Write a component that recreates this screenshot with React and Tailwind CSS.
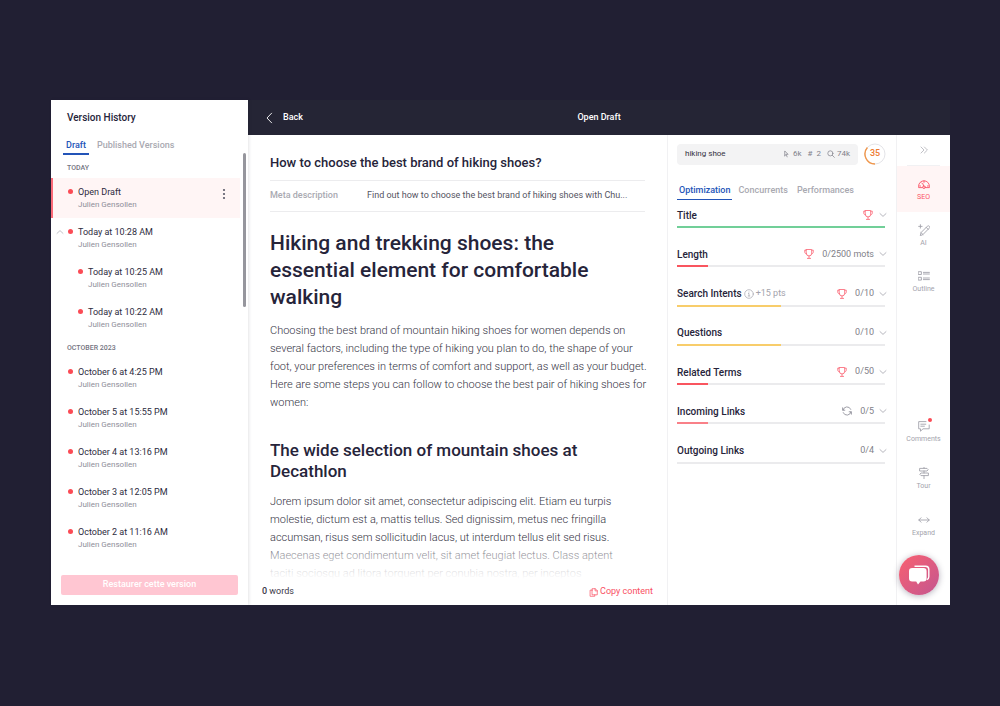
import React from "react";

const TODAY = [
  { title: "Open Draft", state: "active" },
  { title: "Today at 10:28 AM", state: "expanded" },
  { title: "Today at 10:25 AM", state: "nested" },
  { title: "Today at 10:22 AM", state: "nested" },
];

const OCTOBER = [
  { title: "October 6 at 4:25 PM" },
  { title: "October 5 at 15:55 PM" },
  { title: "October 4 at 13:16 PM" },
  { title: "October 3 at 12:05 PM" },
  { title: "October 2 at 11:16 AM" },
];

const CRITERIA = [
  { label: "Title", icon: "trophy", value: 100, color: "bg-[#71cf98]" },
  { label: "Length", icon: "trophy", count: "0/2500 mots", value: 15, color: "bg-[#f9555f]" },
  { label: "Search Intents", icon: "trophy", count: "0/10", value: 50, color: "bg-[#f8cd6b]", hint: "+15 pts" },
  { label: "Questions", count: "0/10", value: 50, color: "bg-[#f8cd6b]" },
  { label: "Related Terms", icon: "trophy", count: "0/50", value: 15, color: "bg-[#f9555f]" },
  { label: "Incoming Links", icon: "refresh", count: "0/5", value: 15, color: "bg-[#f98088]" },
  { label: "Outgoing Links", count: "0/4", value: 0, color: "bg-[#f9555f]" },
];

function Svg({ className, box = "0 0 24 24", stroke = 1.6, children }) {
  return (
    <svg
      className={className}
      viewBox={box}
      fill="none"
      stroke="currentColor"
      strokeWidth={stroke}
      strokeLinecap="round"
      strokeLinejoin="round"
      aria-hidden="true"
    >
      {children}
    </svg>
  );
}

const ChevronDown = () => (
  <Svg className="h-2 w-2 text-[#a3a3ac]" box="0 0 8 8" stroke={0.8}>
    <path d="M1 2.6 4 5.4 7 2.6" />
  </Svg>
);

const Trophy = () => (
  <Svg className="h-3 w-3 text-[#fb7280]" box="0 0 12 12" stroke={0.9}>
    <path d="M3.3 1.5h5.4v3.800A2.700 2.700 0 0 1 6 8a2.700 2.700 0 0 1-2.700-2.700z" />
    <path d="M3.300 2.200H1.700v1.600c0 1.200.7 2 1.700 2.200M8.700 2.200h1.600v1.600c0 1.200-.7 2-1.700 2.200M6 8v2.200M4.400 10.400h3.200" />
  </Svg>
);

const Refresh = () => (
  <Svg className="h-3 w-3 text-[#94949e]" box="0 0 12 12" stroke={0.9}>
    <path d="M2 5.2A4.1 4.1 0 0 1 9.8 4.4M10 6.8a4.1 4.1 0 0 1-7.8.8" />
    <path d="M1.600 2.8v2.4h2.2M10.400 9.2V6.8H8.200" />
  </Svg>
);

function Version({ title, state }) {
  const active = state === "active";
  const nested = state === "nested";
  return (
    <li
      className={
        "flex h-10 items-start border-l-2 pt-2 " +
        (active ? "border-l-[#fb6a78] bg-[#fff5f5] " : "border-l-transparent ") +
        (nested ? "pl-[13px]" : "pl-[3px]")
      }
    >
      <span className="flex h-3 w-3 items-center justify-center">
        {state === "expanded" && (
          <button type="button" aria-label="Collapse versions" className="-ml-1 text-[#b0b0b8]">
            <Svg className="h-2 w-2" box="0 0 8 8" stroke={0.8}>
              <path d="M1 5.4 4 2.6 7 5.4" />
            </Svg>
          </button>
        )}
      </span>
      <span className="mt-[3px] h-[5px] w-[5px] rounded-full bg-[#fb4b55]" />
      <div className="ml-[5px] flex-1">
        <p className="text-[9px] leading-3 text-[#2d2b40]">{title}</p>
        <p className="text-[8px] leading-[14px] text-[#8e8e99]">Julien Gensollen</p>
      </div>
      {active && (
        <button type="button" aria-label="Version options" className="mr-2.5 mt-0.5 text-[#5b5a68]">
          <svg className="h-3 w-3" viewBox="0 0 12 12" fill="currentColor" aria-hidden="true">
            <circle cx="6" cy="2" r="1.1" />
            <circle cx="6" cy="6" r="1.1" />
            <circle cx="6" cy="10" r="1.1" />
          </svg>
        </button>
      )}
    </li>
  );
}

function Group({ label, items }) {
  return (
    <section>
      <h3 className="flex h-5 items-center pl-4 text-[7px] font-medium uppercase text-[#74747f]">{label}</h3>
      <ul>
        {items.map((item) => (
          <Version key={item.title} {...item} />
        ))}
      </ul>
    </section>
  );
}

function Sidebar() {
  return (
    <aside className="z-10 flex w-[197px] shrink-0 flex-col bg-white shadow-[1px_0_3px_rgba(30,30,50,0.12)]">
      <h2 className="pl-4 pt-3 text-[10px] font-medium leading-3 text-[#26243a]">Version History</h2>
      <nav className="mt-[13px] flex gap-[5px] pl-3 text-[9px] font-medium leading-4">
        <a href="#draft" className="border-b-2 border-[#2354b8] px-[3px] text-[#2354b8]">
          Draft
        </a>
        <a href="#published" className="px-[3px] text-[#a9a9b1]">
          Published Versions
        </a>
      </nav>
      <div className="mt-[3px] flex flex-1">
        <div className="flex-1">
          <Group label="Today" items={TODAY} />
          <Group label="October 2023" items={OCTOBER} />
        </div>
        <div className="-mt-[5px] mx-[2px] ml-[3px] h-[154px] w-[3px] rounded-full bg-[#96969d]" />
      </div>
      <div className="pb-[10px] pl-[10px] pr-2.5">
        <button type="button" className="h-5 w-full rounded-xs bg-[#ffc6d2] text-[9px] font-medium text-white">
          Restaurer cette version
        </button>
      </div>
    </aside>
  );
}

function Editor() {
  return (
    <main className="flex min-w-0 flex-1 flex-col">
      <div className="flex flex-1 flex-col pl-[22px] pr-[22px] text-[#26243a]">
        <h1 className="flex h-[46px] items-center border-b border-[#ececee] pt-[10px] text-[13px] font-medium">
          How to choose the best brand of hiking shoes?
        </h1>
        <div className="flex h-[31px] items-center border-b border-[#ececee]">
          <span className="w-[97px] text-[9px] font-medium text-[#a9a9b1]">Meta description</span>
          <span className="flex-1 whitespace-nowrap text-[9px] text-[#55545f]">
            Find out how to choose the best brand of hiking shoes with Chu...
          </span>
        </div>
        <article className="relative -mr-4 h-[367px] overflow-hidden whitespace-nowrap">
          <h2 className="mt-[18px] text-[21px] font-medium leading-[27px]">
            Hiking and trekking shoes: the
            <br />
            essential element for comfortable
            <br />
            walking
          </h2>
          <p className="mt-[11px] text-[11px] font-light leading-[18px] text-[#34333f]">
            Choosing the best brand of mountain hiking shoes for women depends on
            <br />
            several factors, including the type of hiking you plan to do, the shape of your
            <br />
            foot, your preferences in terms of comfort and support, as well as your budget.
            <br />
            Here are some steps you can follow to choose the best pair of hiking shoes for
            <br />
            women:
          </p>
          <h3 className="mt-7 text-[17px] font-medium leading-[21px]">
            The wide selection of mountain shoes at
            <br />
            Decathlon
          </h3>
          <p className="mt-[11px] text-[11px] font-light leading-[18px] text-[#34333f]">
            Jorem ipsum dolor sit amet, consectetur adipiscing elit. Etiam eu turpis
            <br />
            molestie, dictum est a, mattis tellus. Sed dignissim, metus nec fringilla
            <br />
            accumsan, risus sem sollicitudin lacus, ut interdum tellus elit sed risus.
            <br />
            Maecenas eget condimentum velit, sit amet feugiat lectus. Class aptent
            <br />
            taciti sociosqu ad litora torquent per conubia nostra, per inceptos
          </p>
          <div className="absolute inset-x-0 bottom-0 h-9 bg-linear-to-b from-white/20 to-white" />
        </article>
      </div>
      <footer className="flex h-[26px] items-center justify-between pl-3.5 pr-3.5 text-[9px]">
        <span className="text-[#3a3948]">
          <b className="font-medium">0</b> words
        </span>
        <button type="button" className="flex items-center gap-0.5 text-[#f94f63]">
          <Svg className="h-[9px] w-[9px]" box="0 0 10 10" stroke={0.8}>
            <path d="M3.8.8h3.200L9.200 3v4.600H3.800zM6.800.8v2.400h2.400M3.800 2.400H1.200v6.800h5.200V7.600" />
          </Svg>
          Copy content
        </button>
      </footer>
    </main>
  );
}

function Panel() {
  return (
    <section className="flex w-[229px] shrink-0 flex-col border-l border-[#f1f1f3] pl-[9px] pr-[11px] pt-2">
      <div className="flex items-center justify-between">
        <div className="flex h-[21px] w-[181px] items-center rounded-[4px] bg-[#f3f3f4] px-2 text-[8px] text-[#81818b]">
          <span className="flex-1 text-[#33323f]">hiking shoe</span>
          <span className="flex items-center gap-[3px]">
            <Svg className="h-2 w-2" box="0 0 10 10" stroke={0.9}>
              <path d="M3.4 7.200V1.200L7.600 5.400H5.400l-2 1.800M5.200 5.600l1.200 3" />
            </Svg>
            6k
          </span>
          <span className="ml-1.5">#&nbsp;&nbsp;2</span>
          <span className="ml-1.5 flex items-center gap-0.5">
            <Svg className="h-2 w-2" box="0 0 10 10" stroke={0.9}>
              <circle cx="4.2" cy="4.2" r="3.2" />
              <path d="m6.6 6.6 2.6 2.6" />
            </Svg>
            74k
          </span>
        </div>
        <div className="relative -mr-px flex h-[22px] w-[22px] items-center justify-center text-[9px] font-medium text-[#ee7a30]">
          <svg className="absolute inset-0" viewBox="0 0 22 22" fill="none" aria-hidden="true">
            <circle cx="11" cy="11" r="10" stroke="#e4e4e8" />
            <path d="M11 21A10 10 0 0 1 3.4 4.5" stroke="#f0964a" strokeWidth="1.4" />
          </svg>
          35
        </div>
      </div>
      <nav className="mt-[17px] flex gap-[3px] text-[9px] font-medium leading-4 text-[#a9a9b1]">
        <a href="#optimization" className="border-b border-[#2354b8] px-0.5 pb-px text-[#2354b8]">
          Optimization
        </a>
        <a href="#concurrents" className="px-[3px]">
          Concurrents
        </a>
        <a href="#performances" className="px-[3px]">
          Performances
        </a>
      </nav>
      <ul className="grid h-[275px] auto-rows-fr">
        {CRITERIA.map((item) => (
          <li key={item.label} className="flex flex-col pt-[9px]">
            <div className="flex h-3 items-center text-[9px]">
              <span className="text-[10px] font-medium text-[#26243a]">{item.label}</span>
              {item.hint && (
                <span className="ml-0.5 flex items-center gap-0.5 text-[#a3a3ac]">
                  <Svg className="h-2.5 w-2.5" box="0 0 10 10" stroke={0.7}>
                    <circle cx="5" cy="5" r="4.3" />
                    <path d="M4.400 4.400H5v2.400M5 2.9v.2M4.200 7h1.600" />
                  </Svg>
                  {item.hint}
                </span>
              )}
              <span className="ml-auto flex items-center gap-[7px] text-[#7f7f89]">
                {item.icon === "trophy" && <Trophy />}
                {item.icon === "refresh" && <Refresh />}
                {item.count}
                <button type="button" aria-label={"Expand " + item.label} className="-mr-0.5 -ml-0.5">
                  <ChevronDown />
                </button>
              </span>
            </div>
            <div className="mt-[5px] h-0.5 bg-[#ebebed]">
              <div className={"h-full " + item.color} style={{ width: item.value + "%" }} />
            </div>
          </li>
        ))}
      </ul>
    </section>
  );
}

function RailButton({ label, active, children }) {
  return (
    <button
      type="button"
      className={
        "flex h-[46px] w-full flex-col items-center justify-center gap-[3px] text-[7px] leading-2 " +
        (active ? "bg-[#fff5f5] text-[#fb5366]" : "text-[#a3a3ac]")
      }
    >
      {children}
      {label}
    </button>
  );
}

function Rail() {
  return (
    <aside className="relative flex w-[54px] shrink-0 flex-col border-l border-[#f1f1f3]">
      <button type="button" aria-label="Collapse panel" className="mx-2.5 flex h-[31px] items-center justify-center border-b border-[#f1f1f3] text-[#b0b0b8]">
        <Svg className="h-2 w-2" box="0 0 8 8" stroke={0.8}>
          <path d="M1 1l3 3-3 3M4.4 1l3 3-3 3" />
        </Svg>
      </button>
      <RailButton label="SEO" active>
        <Svg className="h-3 w-3" box="0 0 12 12" stroke={0.9}>
          <path d="M4.400 9.600H.6V8.200a5.400 5.400 0 0 1 10.800 0v1.400H7.600" />
          <path d="M6 3v1.400M2.600 8h-1M10.400 8h-1M3.400 4.800l.6.6M4.800 5.600l.9 2.600" />
          <circle cx="6" cy="9.200" r="1.300" />
        </Svg>
      </RailButton>
      <RailButton label="AI">
        <Svg className="h-3 w-3" box="0 0 12 12" stroke={0.9}>
          <path d="M2.400.7v3.400M.7 2.400h3.400M2.400 11.200l.6-2.600 6.400-6.400c.6-.6 1.600-.5 2 .1.500.6.400 1.300-.1 1.800L5 10.500zM8.200 3.400l2 2M3 8.600l2 1.900" />
        </Svg>
      </RailButton>
      <RailButton label="Outline">
        <Svg className="h-3 w-3" box="0 0 12 12" stroke={0.9}>
          <path d="M.6 1.7h2.800v2.800H.6zM.6 7.3h2.800v2.800H.6zM5.400 2.4h6M5.400 4h6M5.400 8h6M5.400 9.600h6" />
        </Svg>
      </RailButton>
      <div className="mt-[104px] flex flex-col gap-px">
        <RailButton label="Comments">
          <span className="relative">
            <Svg className="h-3 w-3" box="0 0 12 12" stroke={0.9}>
              <path d="M8 1.6H.7v7.2h1.8v2.4L5 8.8h6.2V5M2.8 4.2h5M2.8 6.2h3.6" />
            </Svg>
            <span className="absolute -right-0.5 -top-0.5 h-1 w-1 rounded-full bg-[#fb4b55]" />
          </span>
        </RailButton>
        <RailButton label="Tour">
          <Svg className="h-3 w-3" box="0 0 12 12" stroke={0.9}>
            <path d="M2 1.4h7l1.2 1.3L9 4H2zM10 6H3L1.8 7.3 3 8.6h7zM6 .4v1M6 4v2M6 8.6v3" />
          </Svg>
        </RailButton>
        <RailButton label="Expand">
          <Svg className="h-3 w-3" box="0 0 12 12" stroke={0.9}>
            <path d="M.8 6h10.4M3 3.8.8 6 3 8.2M9 3.8 11.2 6 9 8.2" />
          </Svg>
        </RailButton>
      </div>
      <button
        type="button"
        aria-label="Open chat"
        className="absolute bottom-2.5 right-[11px] flex h-10 w-10 items-center justify-center rounded-full bg-linear-to-br from-[#f9606f] to-[#c4558f] text-white shadow-[0_1px_6px_rgba(40,30,60,0.35)]"
      >
        <svg className="h-6 w-6" viewBox="0 0 24 24" aria-hidden="true">
          <path d="M7.5 3.2h11.2c2 0 3.1 1.2 3.1 3.2v7.4c0 1.5-.7 2.5-2 2.9" fill="none" stroke="currentColor" strokeWidth="1.4" />
          <path d="M5.2 5h11.2c2.2 0 3.2 1.1 3.2 3.2v7c0 2.100-1 3.200-3.200 3.200h-2.900L11 21.600l-1.800-3.200h-4C3 18.400 2 17.300 2 15.200v-7C2 6.100 3 5 5.200 5z" fill="currentColor" />
        </svg>
      </button>
    </aside>
  );
}

export default function App() {
  return (
    <div className="min-h-screen bg-[#211f33] py-[100px] pl-[51px] pr-[50px] font-['Roboto',sans-serif]">
      <div className="flex bg-white">
        <Sidebar />
        <div className="flex min-w-0 flex-1 flex-col">
          <header className="grid h-[35px] grid-cols-3 items-center bg-[#252535] text-[9px] font-medium text-white">
            <button type="button" className="flex items-center gap-[7px] pl-4">
              <Svg className="h-3 w-3" box="0 0 12 12" stroke={0.9}>
                <path d="M7.600 1.200 3 6l4.600 4.800" />
              </Svg>
              Back
            </button>
            <span className="text-center">Open Draft</span>
          </header>
          <div className="flex">
            <Editor />
            <Panel />
            <Rail />
          </div>
        </div>
      </div>
    </div>
  );
}
